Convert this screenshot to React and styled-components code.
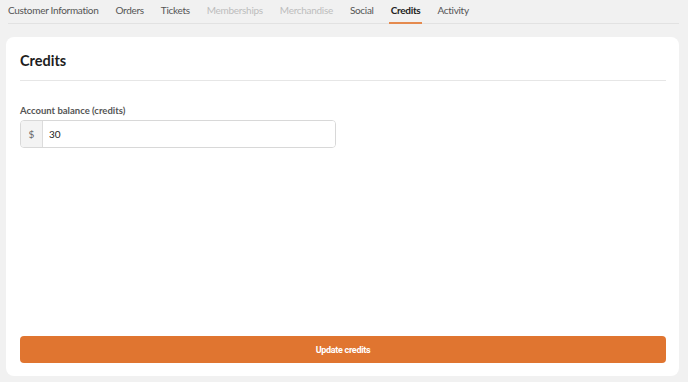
import { useState } from "react";
import styled, { createGlobalStyle } from "styled-components";

const GlobalStyle = createGlobalStyle`
  html, body, #root {
    margin: 0;
    height: 100%;
  }
  body {
    background: #f1f1f1;
    font-family: "Lato", "Liberation Sans", sans-serif;
    color: #222;
  }
`;

const tabs = [
  { label: "Customer Information" },
  { label: "Orders" },
  { label: "Tickets" },
  { label: "Memberships", disabled: true },
  { label: "Merchandise", disabled: true },
  { label: "Social" },
  { label: "Credits" },
  { label: "Activity" },
];

const App = () => {
  const [active, setActive] = useState("Credits");
  const [balance, setBalance] = useState("30");

  return (
    <>
      <GlobalStyle />
      <Page>
        <TabBar>
          {tabs.map((tab) => (
            <Tab
              key={tab.label}
              $active={active === tab.label}
              $disabled={tab.disabled}
              onClick={() => !tab.disabled && setActive(tab.label)}
            >
              {tab.label}
            </Tab>
          ))}
        </TabBar>

        <Card>
          <Title>Credits</Title>
          <Divider />

          <Field>
            <Label>Account balance (credits)</Label>
            <InputGroup>
              <Addon>$</Addon>
              <Input
                value={balance}
                onChange={(e) => setBalance(e.target.value)}
              />
            </InputGroup>
          </Field>

          <PrimaryButton>Update credits</PrimaryButton>
        </Card>
      </Page>
    </>
  );
};

const Page = styled.div`
  height: 100%;
  display: flex;
  flex-direction: column;
  box-sizing: border-box;
  padding: 0 9px 6px 6px;
`;

const TabBar = styled.nav`
  display: flex;
  gap: 17px;
  height: 23px;
  margin: 0 0 13px 2px;
  border-bottom: 1px solid #e2e2e2;
`;

const Tab = styled.button`
  position: relative;
  border: none;
  background: none;
  padding: 0;
  height: 23px;
  font-family: inherit;
  font-size: 10px;
  letter-spacing: -0.3px;
  font-weight: ${({ $active }) => ($active ? 700 : 400)};
  color: ${({ $active, $disabled }) =>
    $disabled ? "#bdbdbd" : $active ? "#222" : "#555"};
  cursor: ${({ $disabled }) => ($disabled ? "default" : "pointer")};
  line-height: 21px;
  align-self: flex-start;
  display: flex;
  align-items: flex-start;

  &::after {
    content: "";
    position: absolute;
    left: -2px;
    right: -2px;
    bottom: -1px;
    height: 2px;
    background: ${({ $active }) => ($active ? "#e58a4e" : "transparent")};
  }
`;

const Card = styled.section`
  flex: 1;
  display: flex;
  flex-direction: column;
  background: #fff;
  border-radius: 8px;
  padding: 14px 13px 13px 14px;
`;

const Title = styled.h2`
  margin: 0;
  font-size: 14.5px;
  font-weight: 700;
  line-height: 20px;
  color: #1d1d1d;
`;

const Divider = styled.hr`
  margin: 9px 0 0;
  border: none;
  border-top: 1px solid #e6e6e6;
`;

const Field = styled.div`
  display: flex;
  flex-direction: column;
  gap: 2px;
  margin-top: 23px;
`;

const Label = styled.label`
  font-size: 9.5px;
  font-weight: 700;
  color: #555;
  line-height: 14px;
`;

const InputGroup = styled.div`
  display: flex;
  width: 316px;
  height: 28px;
  box-sizing: border-box;
  border: 1px solid #d8d8d8;
  border-radius: 4px;
  overflow: hidden;
`;

const Addon = styled.span`
  width: 21px;
  display: flex;
  align-items: center;
  justify-content: center;
  background: #f3f3f3;
  border-right: 1px solid #dcdcdc;
  font-size: 10px;
  color: #666;
`;

const Input = styled.input`
  flex: 1;
  border: none;
  outline: none;
  padding: 0 6px;
  font-family: inherit;
  font-size: 10px;
  color: #222;
`;

const PrimaryButton = styled.button`
  margin-top: auto;
  height: 27px;
  border: none;
  border-radius: 4px;
  background: #e07530;
  color: #fff;
  font-family: "Roboto", sans-serif;
  font-size: 9px;
  letter-spacing: -0.3px;
  font-weight: 700;
  cursor: pointer;
`;

export default App;
